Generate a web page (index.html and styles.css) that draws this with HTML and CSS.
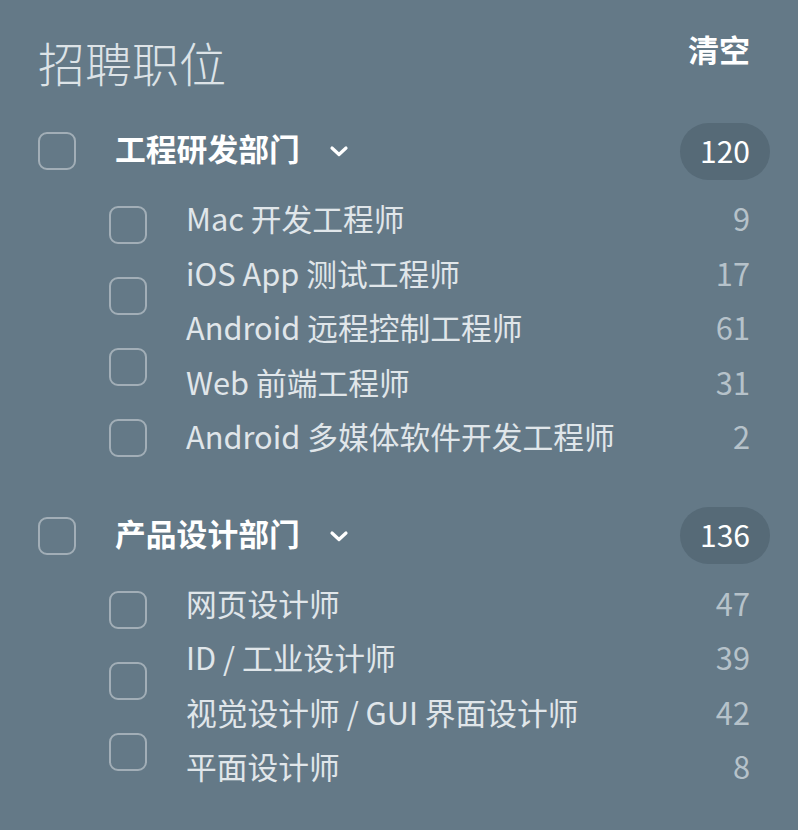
FILE: index.html
```html
<!DOCTYPE html>
<html lang="zh-CN">
<head>
<meta charset="utf-8">
<title>招聘职位</title>
<link rel="stylesheet" href="styles.css">
</head>
<body>
<div class="panel">
  <header class="head">
    <h1 class="title">招聘职位</h1>
    <button class="clear" type="button">清空</button>
  </header>

  <section class="group">
    <div class="group-head">
      <span class="box"></span>
      <span class="group-name">工程研发部门</span>
      <svg class="chev" width="20" height="12" viewBox="0 0 20 12"><polyline points="3,3 10,9.5 17,3" fill="none" stroke="#fff" stroke-width="3.2" stroke-linecap="round" stroke-linejoin="round"/></svg>
      <span class="badge">120</span>
    </div>
    <div class="group-body">
      <div class="boxes">
        <span class="box"></span>
        <span class="box"></span>
        <span class="box"></span>
        <span class="box"></span>
      </div>
      <ul class="jobs">
        <li><span class="job">Mac 开发工程师</span><span class="num">9</span></li>
        <li><span class="job">iOS App 测试工程师</span><span class="num">17</span></li>
        <li><span class="job">Android 远程控制工程师</span><span class="num">61</span></li>
        <li><span class="job">Web 前端工程师</span><span class="num">31</span></li>
        <li><span class="job">Android 多媒体软件开发工程师</span><span class="num">2</span></li>
      </ul>
    </div>
  </section>

  <section class="group">
    <div class="group-head">
      <span class="box"></span>
      <span class="group-name">产品设计部门</span>
      <svg class="chev" width="20" height="12" viewBox="0 0 20 12"><polyline points="3,3 10,9.5 17,3" fill="none" stroke="#fff" stroke-width="3.2" stroke-linecap="round" stroke-linejoin="round"/></svg>
      <span class="badge">136</span>
    </div>
    <div class="group-body">
      <div class="boxes">
        <span class="box"></span>
        <span class="box"></span>
        <span class="box"></span>
      </div>
      <ul class="jobs">
        <li><span class="job">网页设计师</span><span class="num">47</span></li>
        <li><span class="job">ID / 工业设计师</span><span class="num">39</span></li>
        <li><span class="job">视觉设计师 / GUI 界面设计师</span><span class="num">42</span></li>
        <li><span class="job">平面设计师</span><span class="num">8</span></li>
      </ul>
    </div>
  </section>
</div>
</body>
</html>
```

FILE: styles.css
```css
* { box-sizing: border-box; }

html, body {
  margin: 0;
  padding: 0;
}

body {
  background: #647987;
  font-family: "Noto Sans CJK SC", "Noto Sans", sans-serif;
  color: #e0e6ea;
  width: 798px;
  height: 830px;
  overflow: hidden;
}

.panel {
  padding: 0 28px 0 38px;
}

.head {
  display: flex;
  justify-content: space-between;
  align-items: flex-start;
  padding-top: 34px;
  padding-right: 20px;
}

.title {
  margin: 4px 0 0 0;
  font-size: 47px;
  line-height: 48px;
  font-weight: 300;
  color: #dde3e7;
  letter-spacing: 0;
}

.clear {
  background: none;
  border: 0;
  padding: 0;
  font-family: inherit;
  font-size: 31px;
  line-height: 30px;
  font-weight: 700;
  color: #ffffff;
}

.group {
  margin-top: 36.5px;
}

.group + .group {
  margin-top: 44px;
}

.group-head {
  display: flex;
  align-items: center;
  height: 57px;
}

.box {
  display: block;
  width: 38px;
  height: 38px;
  border: 2px solid rgba(255, 255, 255, 0.4);
  border-radius: 9px;
  flex: none;
}

.group-name {
  margin-left: 39px;
  font-size: 30.8px;
  line-height: 36px;
  font-weight: 700;
  color: #ffffff;
  position: relative;
  top: -3px;
}

.chev {
  margin-left: 29px;
  flex: none;
}

.badge {
  margin-left: auto;
  height: 57px;
  padding: 0 20px;
  border-radius: 29px;
  background: #566a77;
  color: #ffffff;
  font-size: 30px;
  line-height: 55px;
  font-weight: 400;
}

.group-body {
  display: flex;
  margin-top: 11px;
  padding-left: 71px;
}

.boxes {
  display: flex;
  flex-direction: column;
  gap: 33px;
  padding-top: 15.5px;
}

.jobs {
  list-style: none;
  margin: 0 20px 0 39px;
  padding: 0;
  flex: 1;
}

.jobs li {
  display: flex;
  justify-content: space-between;
  align-items: center;
  height: 54.5px;
  font-size: 30.75px;
}

.job {
  color: #e0e6ea;
}

.num {
  color: #b6c2ca;
}
```
